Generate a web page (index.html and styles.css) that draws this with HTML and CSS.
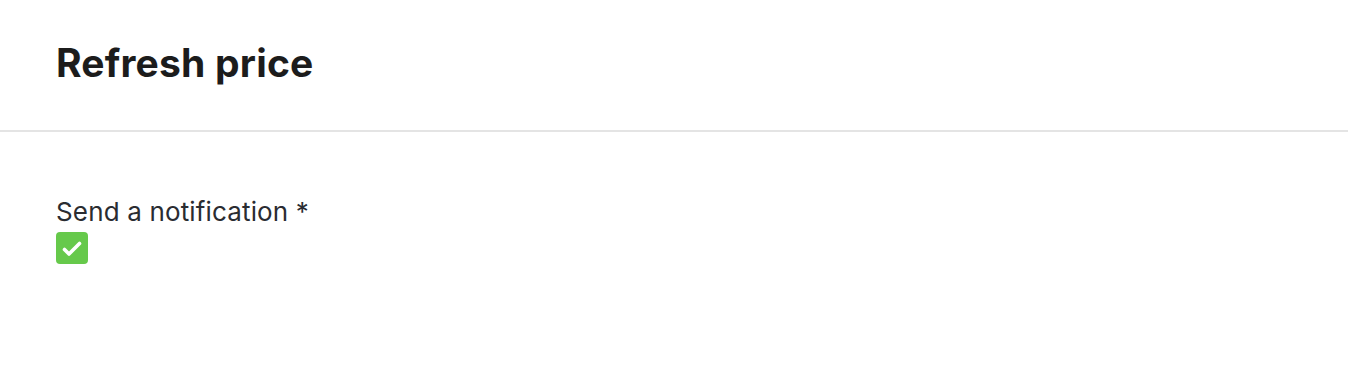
FILE: index.html
```html
<!DOCTYPE html>
<html>
<head>
	<meta charset="utf-8">
	<title>Refresh price</title>
	<link rel="stylesheet" href="styles.css">
</head>
<body>

<div class="modal-header">
	<h1>Refresh price</h1>
</div>

<div class="modal-body">
	<div class="form-group">
		<label for="notify">Send a notification *</label>
		<span class="checkbox">
			<svg width="32" height="32" viewBox="0 0 32 32"><path d="M8.5 17.5 L13 22 L23.5 11.5" fill="none" stroke="#fff" stroke-width="3.6" stroke-linecap="round" stroke-linejoin="round"/></svg>
		</span>
	</div>
</div>

</body>
</html>
```

FILE: styles.css
```css
body {
	margin: 0;
	background: #fff;
	font-family: Inter, "Noto Sans", sans-serif;
	color: #1c1c1c;
}

.modal-header {
	padding: 39px 56px 0;
	height: 91px;
	border-bottom: 2px solid #e4e4e4;
}

.modal-header h1 {
	margin: 0;
	font-size: 39px;
	font-weight: 700;
	line-height: 48px;
	letter-spacing: 0.2px;
}

.modal-body {
	padding: 64px 56px 0;
}

.form-group label {
	display: block;
	font-size: 26px;
	line-height: 32px;
	letter-spacing: 0.15px;
	color: #2a2c31;
}

.checkbox {
	display: block;
	width: 32px;
	height: 32px;
	margin-top: 4px;
	border-radius: 4px;
	background: #66c94b;
}

.checkbox svg {
	display: block;
}
```
